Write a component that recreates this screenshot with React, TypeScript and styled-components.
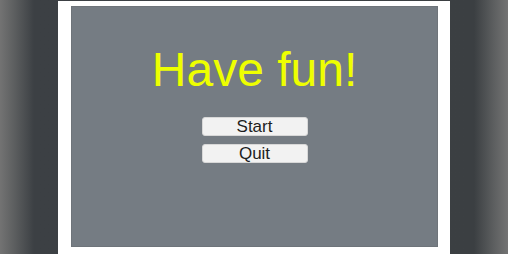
import React from "react";
import styled, { createGlobalStyle } from "styled-components";

const Global = createGlobalStyle`
  html, body { margin: 0; padding: 0; }
  body {
    width: 508px;
    height: 254px;
    overflow: hidden;
    font-family: "Liberation Sans", Arial, sans-serif;
  }
`;

const Stage = styled.div`
  width: 508px;
  height: 254px;
  box-sizing: border-box;
  padding-top: 1px;
  display: flex;
  justify-content: center;
  background: linear-gradient(
    to right,
    #737373 0px,
    #5d5f60 14px,
    #3c4044 34px,
    #3b3f42 474px,
    #5d5f60 494px,
    #737373 508px
  );
`;

const Frame = styled.div`
  width: 392px;
  height: 253px;
  box-sizing: border-box;
  padding: 5px 12px 7px 13px;
  background: #ffffff;
  display: flex;
`;

const Panel = styled.div`
  flex: 1;
  background: #757c83;
  box-shadow: inset 0 0 0 1px #6e747a;
  display: flex;
  flex-direction: column;
  align-items: center;
`;

const Title = styled.h1`
  margin: 37px 0 0 0;
  font-family: "Liberation Sans", Arial, sans-serif;
  font-weight: 400;
  font-size: 48px;
  line-height: 54px;
  color: #eeff00;
`;

const Menu = styled.div`
  margin-top: 20px;
  display: flex;
  flex-direction: column;
  gap: 8px;
`;

const Button = styled.button`
  width: 106px;
  height: 19px;
  padding: 0;
  border: 1px solid #d8d8d8;
  border-radius: 3px;
  background: #f2f2f2;
  color: #1e1e1e;
  font-family: "Liberation Sans", Arial, sans-serif;
  font-size: 17px;
  line-height: 17px;
  display: flex;
  align-items: center;
  justify-content: center;
  cursor: pointer;
`;

export default function App() {
  return (
    <>
      <Global />
      <Stage>
        <Frame>
          <Panel>
            <Title>Have fun!</Title>
            <Menu>
              <Button>Start</Button>
              <Button>Quit</Button>
            </Menu>
          </Panel>
        </Frame>
      </Stage>
    </>
  );
}
